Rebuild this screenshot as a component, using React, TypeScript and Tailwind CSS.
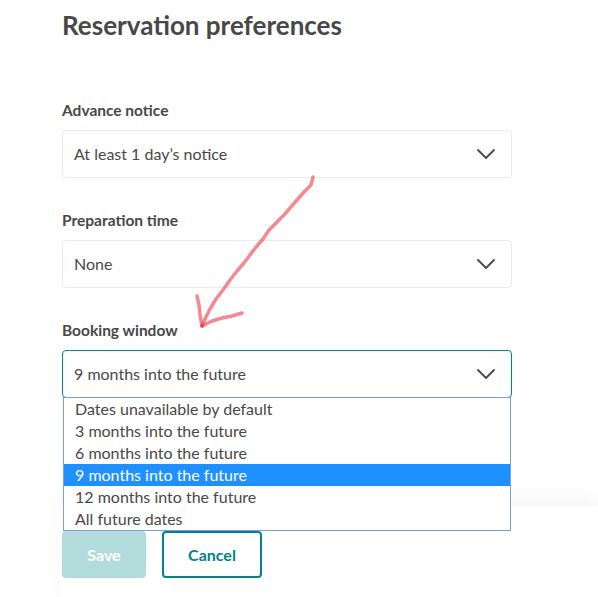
const font = { fontFamily: "Lato, 'Liberation Sans', sans-serif" };

const bookingOptions = [
  "Dates unavailable by default",
  "3 months into the future",
  "6 months into the future",
  "9 months into the future",
  "12 months into the future",
  "All future dates",
];

function Chevron() {
  return (
    <svg width="18" height="10" viewBox="0 0 18 10" fill="none" className="shrink-0">
      <path d="M1 1l8 8 8-8" stroke="#484848" strokeWidth="1.8" strokeLinecap="round" strokeLinejoin="round" />
    </svg>
  );
}

function SelectField({
  label,
  value,
  active,
}: {
  label: string;
  value: string;
  active?: boolean;
}) {
  return (
    <div>
      <div className="text-[15.5px] font-bold leading-[20px] text-[#484848]">{label}</div>
      <div
        className={`mt-[10px] flex h-[48px] items-center justify-between rounded-[4px] border pl-[11px] pr-[16px] ${
          active ? "border-[#008489]" : "border-[#ebebeb]"
        }`}
      >
        <span className="text-[16px] leading-[20px] text-[#484848]">{value}</span>
        <Chevron />
      </div>
    </div>
  );
}

function Arrow() {
  return (
    <svg
      className="pointer-events-none absolute left-0 top-0"
      width="598"
      height="597"
      viewBox="0 0 598 597"
      fill="none"
    >
      <g stroke="#ef3b4a" strokeOpacity="0.6" strokeWidth="3.5" strokeLinecap="round" strokeLinejoin="round">
        <path d="M313 177 L311 185 L304 192 L297 200 L290 208 L284 215 L277 222 L269 230 L263 239 L256 247 L250 255 L244 263 L237 271 L230 280 L223 290 L216 299 L210 309 L205 319 L202 326" />
        <path d="M202 326 L200 315 L199 305 L197 296" />
        <path d="M202 326 L212 321 L222 318 L232 316 L242 313" />
      </g>
    </svg>
  );
}

export default function App() {
  return (
    <div className="relative h-[597px] w-[598px] overflow-hidden bg-white" style={font}>
      <div className="pl-[62px] pt-[9px]">
        <h1 className="text-[26px] font-bold leading-[32px] text-[#484848]">Reservation preferences</h1>

        <div className="mt-[59px] flex w-[450px] flex-col gap-[32px]">
          <SelectField label="Advance notice" value="At least 1 day’s notice" />
          <SelectField label="Preparation time" value="None" />
          <div className="relative">
            <SelectField label="Booking window" value="9 months into the future" active />
            <ul className="absolute left-[1px] right-[1px] top-[77px] z-20 border border-[#7b9fd8] bg-white">
              {bookingOptions.map((opt) => (
                <li
                  key={opt}
                  className={`h-[22px] pl-[11px] text-[16px] leading-[21px] ${
                    opt === "9 months into the future" ? "bg-[#1e90ff] text-white" : "text-[#484848]"
                  }`}
                >
                  {opt}
                </li>
              ))}
            </ul>
          </div>
        </div>
      </div>

      <div className="ml-[60px] mt-[108px] bg-white pl-[2px] pt-[25px] shadow-[0_-10px_16px_rgba(0,0,0,0.035)]">
        <div className="flex gap-[16px]">
          <button className="h-[47px] w-[84px] rounded-[4px] bg-[#b2dbdb] text-[16px] font-bold text-white">
            Save
          </button>
          <button className="h-[47px] w-[100px] rounded-[4px] border-2 border-[#008489] bg-white text-[16px] font-bold text-[#008489]">
            Cancel
          </button>
        </div>
        <div className="h-[30px]" />
      </div>

      <Arrow />
    </div>
  );
}
